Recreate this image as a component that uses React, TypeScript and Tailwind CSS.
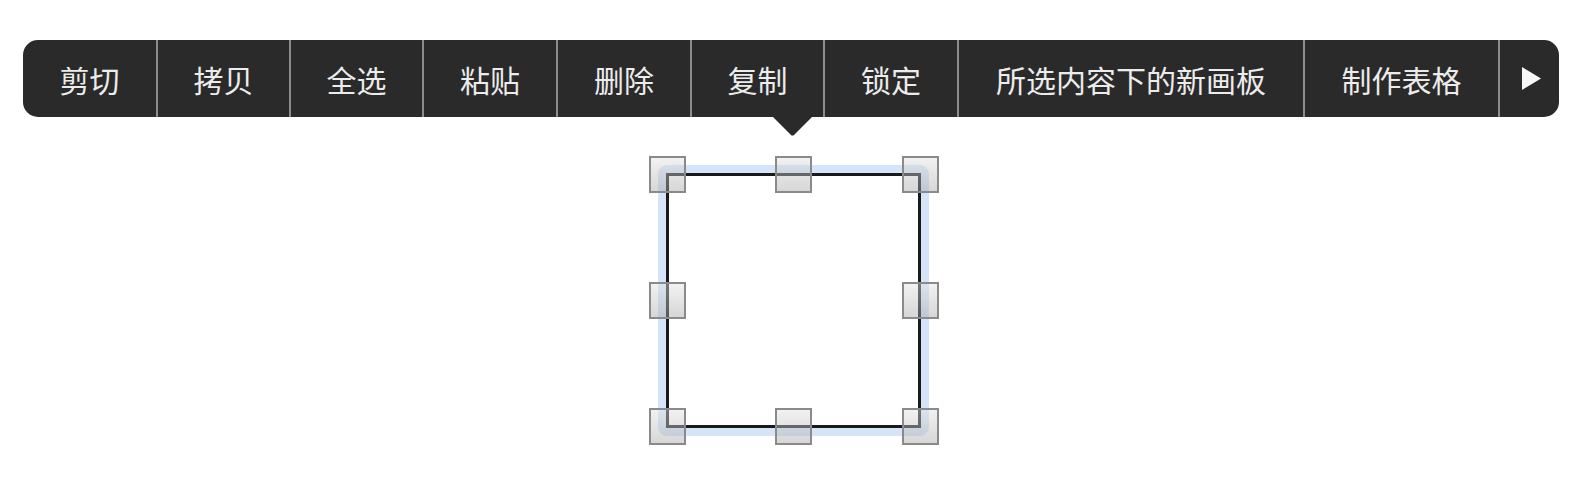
import React from "react";

const items: { label: string; w: string }[] = [
  { label: "剪切", w: "w-[133px]" },
  { label: "拷贝", w: "w-[133px]" },
  { label: "全选", w: "w-[133px]" },
  { label: "粘贴", w: "w-[134px]" },
  { label: "删除", w: "w-[134px]" },
  { label: "复制", w: "w-[133px]" },
  { label: "锁定", w: "w-[134px]" },
  { label: "所选内容下的新画板", w: "w-[346px]" },
  { label: "制作表格", w: "w-[195px]" },
];

function Handle({ pos }: { pos: string }) {
  return (
    <div
      className={`absolute w-[37px] h-[37px] border-2 border-[#8a8a8a] bg-[linear-gradient(to_bottom,rgba(225,225,225,0.45),rgba(165,165,165,0.45))] ${pos}`}
    />
  );
}

export default function App() {
  return (
    <div className="w-[1580px] h-[483px] bg-white pt-[40px] font-['Noto_Sans_CJK_SC','Noto_Sans',sans-serif]">
      <div className="relative ml-[23px] w-[1536px] h-[77px] bg-[#2a2a2a] rounded-[15px] flex">
        {items.map((it, i) => (
          <div
            key={it.label}
            className={`${it.w} h-full flex items-center justify-center text-[30px] text-[#ececec] leading-none ${
              i > 0 ? "border-l-2 border-[#8c8c8c]" : ""
            }`}
          >
            {it.label}
          </div>
        ))}
        <div className="flex-1 h-full flex items-center justify-center border-l-2 border-[#8c8c8c] pl-[3px]">
          <svg width="19" height="23" viewBox="0 0 19 23">
            <polygon points="0,0 19,11.5 0,23" fill="#f7f7f7" />
          </svg>
        </div>
        <svg
          className="absolute top-full left-[750px]"
          width="39"
          height="19"
          viewBox="0 0 39 19"
        >
          <polygon points="0,0 39,0 20.5,18.5 18.5,18.5" fill="#2a2a2a" />
        </svg>
      </div>

      <div className="relative ml-[658px] mt-[48px] w-[271px] h-[271px] rounded-[9px] bg-[#d5e4f9] p-[8px]">
        <div className="w-full h-full border-[3px] border-[#1a1a1a] bg-white" />
        <Handle pos="left-[-9px] top-[-9px]" />
        <Handle pos="left-[117px] top-[-9px]" />
        <Handle pos="left-[244px] top-[-9px]" />
        <Handle pos="left-[-9px] top-[117px]" />
        <Handle pos="left-[244px] top-[117px]" />
        <Handle pos="left-[-9px] top-[243px]" />
        <Handle pos="left-[117px] top-[243px]" />
        <Handle pos="left-[244px] top-[243px]" />
      </div>
    </div>
  );
}
